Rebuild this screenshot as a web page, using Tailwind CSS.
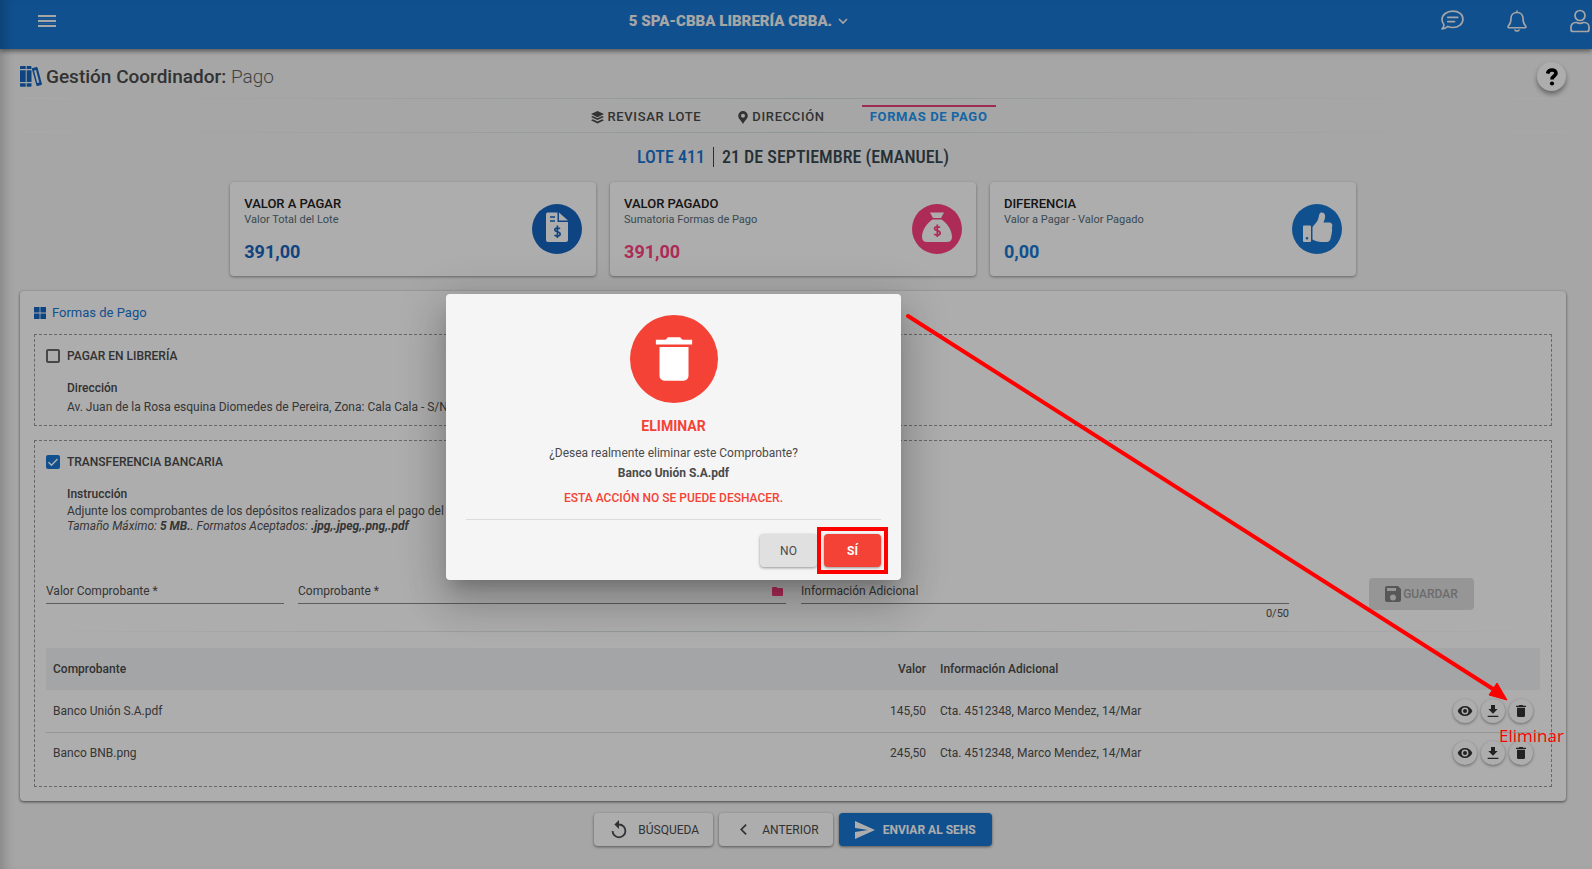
<!DOCTYPE html>
<html lang="es">
<head>
<meta charset="utf-8">
<meta name="viewport" content="width=device-width, initial-scale=1">
<title>Gestión Coordinador: Pago</title>
<script src="https://cdn.jsdelivr.net/npm/@tailwindcss/browser@4"></script>
</head>
<body class="relative min-h-screen overflow-x-hidden bg-[#f5f5f5] font-['Roboto',sans-serif] text-[12px] leading-5 text-[#505050]">

<!-- Shared icon shapes -->
<svg class="hidden" aria-hidden="true">
  <symbol id="i-trash" viewBox="0 0 24 24"><path d="M6 19a2 2 0 0 0 2 2h8a2 2 0 0 0 2-2V7H6zM19.500 4H15.500l-1-1h-5l-1 1H4.500v2h15z"/></symbol>
  <symbol id="i-eye" viewBox="0 0 24 24"><path fill-rule="evenodd" d="M12 4.500C7 4.500 2.700 7.600 1 12c1.700 4.400 6 7.500 11 7.500s9.300-3.100 11-7.500c-1.700-4.400-6-7.500-11-7.500zm0 12.700a5.200 5.200 0 1 1 0-10.400 5.200 5.200 0 0 1 0 10.400zM12 9a3 3 0 1 0 0 6 3 3 0 0 0 0-6z"/></symbol>
  <symbol id="i-down" viewBox="0 0 24 24"><path d="M19 9h-4V3H9v6H5l7 7zM4 19v2h16v-2z"/></symbol>
</svg>

<header class="flex h-[49px] items-center bg-[#1976d2] pb-2 shadow-[0_2px_5px_rgba(0,0,0,0.5)]">
  <button type="button" aria-label="Menú" class="ml-[38px] w-[18px]">
    <svg class="h-3 w-[18px]" viewBox="0 0 18 12" fill="#f5f5f5"><path d="M0 0h18v2H0zM0 5h18v2H0zM0 10h18v2H0z"/><path d="M0 3.200h18v1H0zM0 8h18v1H0z" opacity=".15"/></svg>
  </button>
  <div class="flex flex-1 justify-center">
    <button type="button" class="mr-5 flex items-center gap-1.5 text-[15px] font-black text-[#f5f5f5]">5 SPA-CBBA LIBRERÍA CBBA.
      <svg class="size-2.5" viewBox="0 0 10 10" fill="none" stroke="currentColor" stroke-width="1.700"><path d="M1 3l4 4 4-4"/></svg>
    </button>
  </div>
  <nav class="mr-0.5 flex items-center gap-[42px] text-[#f5f5f5]" aria-label="Usuario">
    <button type="button" aria-label="Mensajes"><svg class="size-[23px]" viewBox="0 0 22 22" fill="none" stroke="currentColor" stroke-width="1.600" stroke-linejoin="round"><path d="M1 19c1.400-1.200 2-2.500 1.700-4.200A7.300 7.300 0 0 1 1 10c0-4.600 4.600-8 10.300-8S21 5.300 21 9.700s-4.300 8-9.700 8c-1.700 0-3.300-.300-4.700-1C5.200 18 3.200 19 1 19zM6.500 8h9.500M6.500 12h6.500" stroke-linecap="round"/></svg></button>
    <button type="button" aria-label="Notificaciones"><svg class="size-[22px]" viewBox="0 0 22 22" fill="none" stroke="currentColor" stroke-width="1.600" stroke-linejoin="round" stroke-linecap="round"><path d="M11 1v1.500M11 2.500c-4 0-6 3-6 6 0 4.300-1 5.800-2.600 7.300-.8.700-.5 2 .700 2h15.800c1.200 0 1.500-1.300.700-2C18 14.300 17 12.800 17 8.500c0-3-2-6-6-6zM9 20c.4 1.400 3.600 1.400 4 0"/></svg></button>
    <button type="button" aria-label="Perfil"><svg class="h-[24px] w-[20px]" viewBox="0 0 20 24" fill="none" stroke="currentColor" stroke-width="1.700"><circle cx="10" cy="6.500" r="5"/><path d="M5.500 13.500h1.200c2 1 4.600 1 6.600 0h1.200a4.500 4.500 0 0 1 4.500 4.500v2.500a2 2 0 0 1-2 2H3a2 2 0 0 1-2-2V18a4.500 4.500 0 0 1 4.500-4.500z"/></svg></button>
  </nav>
</header>

<main class="pr-[26px] pl-5">
  <div class="flex h-[49px] items-center justify-between pt-1.5">
    <h1 class="flex items-center gap-1 text-[19px] leading-6 font-medium text-[#4a4a4a]">
      <svg class="h-[21px] w-[22px] text-[#1565c0]" viewBox="0 0 22 21" fill="currentColor"><path d="M0 1q0-1 1-1h4.700v3H0zM0 4.200h5.700V16H0zM0 17.200h5.700v3.500H1q-1 0-1-1zM6.700 0h3.800q1 0 1 1v2H6.700zM6.700 4.200h4.800V16H6.700zM6.700 17.200h4.800v2.500q0 1-1 1H6.700z"/><path fill-rule="evenodd" d="M12 2.300l4.400-1.200q.9-.2 1.200.700l4.300 16q.2.900-.7 1.100l-3.600 1q-.9.200-1.200-.7L12 3.500zm2 2.100l3.300 12.600 2-.5L16 3.900z"/></svg>
      <span>Gestión Coordinador: <span class="font-light text-[#616161]">Pago</span></span>
    </h1>
    <button type="button" aria-label="Ayuda" class="flex size-[29px] items-center justify-center rounded-full bg-white text-black shadow-[0_3px_5px_rgba(0,0,0,0.4)]">
      <svg class="h-[18px] w-3" viewBox="0 0 12 18" fill="none" stroke="currentColor" stroke-width="3.600"><path d="M1.500 5.600C2.100 3.200 3.700 2 6 2c2.500 0 4 1.300 4 3.200 0 3-4 2.700-4 6.200"/><circle cx="6" cy="15.500" r="2.100" fill="currentColor" stroke="none"/></svg>
    </button>
  </div>

  <div class="h-px bg-linear-to-r from-[#fafafa] via-[#d3dde1] to-[#fafafa]"></div>
  <nav class="flex h-[33px] justify-center gap-[37px] text-[13px] font-medium text-[#4a4a4a]" aria-label="Pasos">
    <a href="#lote" class="mt-1.5 flex h-6 items-center gap-1 tracking-wider"><svg class="size-[13px]" viewBox="0 0 13 13" fill="currentColor"><path d="M6.500 0L13 3 6.500 6.200 0 3zM1.800 5L0 6l6.500 3L13 6l-1.800-1-4.700 2.300zM1.800 8.200L0 9.300l6.500 3.200L13 9.300l-1.800-1.100-4.700 2.200z"/></svg>REVISAR LOTE</a>
    <a href="#direccion" class="mt-1.5 flex h-6 items-center gap-1 tracking-wider"><svg class="h-[13px] w-[10px]" viewBox="0 0 10 13" fill="currentColor"><path fill-rule="evenodd" d="M5 0a4.800 4.800 0 0 0-4.800 4.800C.2 7.600 3 9.500 5 13c2-3.500 4.800-5.400 4.800-8.200A4.800 4.800 0 0 0 5 0zm0 6.800a2 2 0 1 1 0-4 2 2 0 0 1 0 4z"/></svg>DIRECCIÓN</a>
    <a href="#pago" aria-current="step" class="mt-1.5 flex h-6 items-center border-t-2 border-[#ec407a] px-2 pb-0.5 font-bold tracking-wider text-[#2196f3]">FORMAS DE PAGO</a>
  </nav>
  <div class="h-px bg-linear-to-r from-[#fafafa] via-[#d3dde1] to-[#fafafa]"></div>

  <h2 class="mt-3 flex items-center justify-center gap-2 font-['Roboto_Condensed','Roboto',sans-serif] text-[18px] leading-6 font-medium text-[#37474f]"><span class="text-[#1976d2]">LOTE 411</span><span class="h-5 w-px bg-[#37474f]"></span><span>21 DE SEPTIEMBRE (EMANUEL)</span></h2>

  <section class="mx-auto mt-[13px] grid w-[72.8%] grid-cols-3 gap-3.5" aria-label="Totales">
    <article class="flex h-[94px] items-center justify-between rounded bg-white px-3.5 shadow-[0_1px_3px_rgba(0,0,0,0.4)]">
      <div><h3 class="text-[13px] font-medium text-[#212121]">VALOR A PAGAR</h3><p class="text-[11px] leading-3 text-[#546e7a]">Valor Total del Lote</p><p class="mt-3.5 text-[18px] leading-6 font-bold text-[#1565c0]">391,00</p></div>
      <svg class="size-[50px]" viewBox="0 0 50 50"><circle cx="25" cy="25" r="25" fill="#1565c0"/><path fill="#fff" d="M15.500 8.500h10v9.500h10.500V36q0 2-2 2H16q-2 0-2-2V10.500q0-2 1.500-2zM27 8.500l9 8h-9z"/><path stroke="#1565c0" stroke-width="1.500" d="M18 13h5M18 17h5"/><path d="M28 24.800c-1-1-5.200-1.200-5.200 1.200 0 2.300 5.400 1.300 5.400 4 0 2.500-4.400 2.600-5.700 1M25.400 21.500v12.500" fill="none" stroke="#1565c0" stroke-width="1.600"/></svg>
    </article>
    <article class="flex h-[94px] items-center justify-between rounded bg-white px-3.5 shadow-[0_1px_3px_rgba(0,0,0,0.4)]">
      <div><h3 class="text-[13px] font-medium text-[#212121]">VALOR PAGADO</h3><p class="text-[11px] leading-3 text-[#546e7a]">Sumatoria Formas de Pago</p><p class="mt-3.5 text-[18px] leading-6 font-bold text-[#ff4081]">391,00</p></div>
      <svg class="size-[50px]" viewBox="0 0 50 50"><circle cx="25" cy="25" r="25" fill="#ff4081"/><path fill="#fff" d="M18 8.500h14l-3 5.500h-8zM20.500 15.500h9C35 19 40 26 40 33q0 5-5 5H15q-5 0-5-5c0-7 5-14 10.500-17.500z"/><path d="M28 23.500c-1-1-5.500-1.200-5.500 1.300 0 2.400 5.700 1.300 5.700 4.200 0 2.600-4.700 2.700-6 1M25.300 20.500v12.500" fill="none" stroke="#ff4081" stroke-width="1.700"/></svg>
    </article>
    <article class="flex h-[94px] items-center justify-between rounded bg-white px-3.5 shadow-[0_1px_3px_rgba(0,0,0,0.4)]">
      <div><h3 class="text-[13px] font-medium text-[#212121]">DIFERENCIA</h3><p class="text-[11px] leading-3 text-[#546e7a]">Valor a Pagar - Valor Pagado</p><p class="mt-3.5 text-[18px] leading-6 font-bold text-[#1976d2]">0,00</p></div>
      <svg class="size-[50px]" viewBox="0 0 50 50"><circle cx="25" cy="25" r="25" fill="#1976d2"/><path fill="#fff" fill-rule="evenodd" d="M12 21.500h6q1 0 1 1V37q0 1-1 1h-6q-1 0-1-1V22.500q0-1 1-1zm3 11.500a1.300 1.300 0 1 0 0 2.600 1.300 1.300 0 0 0 0-2.600z"/><path fill="#fff" d="M20.500 23c2-2.500 5-5 6-9 .5-3 1-5.500 3-5.500 3 0 4 2.500 3.500 5-.3 2-1 3.500-1.500 5H37c3 0 4 2.500 3 4.500 .6 5-1 9-1.500 12-.8 2.500-2.500 3-5 3-5 .3-9-.5-13-2.500z"/></svg>
    </article>
  </section>

  <section class="mt-[15px] rounded bg-white px-3.5 pt-3 pb-[14px] shadow-[0_1px_3px_rgba(0,0,0,0.6)]">
    <h2 class="flex items-center gap-1.5 text-[13px] text-[#1976d2]"><svg class="size-3" viewBox="0 0 12 12" fill="#1565c0"><path d="M0 0h5.600v5.600H0zM6.400 0H12v5.600H6.400zM0 6.400h5.600V12H0zM6.400 6.400H12V12H6.400z"/></svg>Formas de Pago</h2>

    <div class="mt-[11px] border border-dashed border-[#9a9a9a] px-[11px] pt-[11px] pb-[9px]">
      <label class="flex items-center gap-[7px] font-medium text-[#4a4a4a]"><input type="checkbox" class="size-3.5 appearance-none rounded-xs border-2 border-[#6a6a6a]">PAGAR EN LIBRERÍA</label>
      <h3 class="mt-3 ml-[21px] font-medium text-[#4a4a4a]">Dirección</h3>
      <p class="ml-[21px] leading-[18px]">Av. Juan de la Rosa esquina Diomedes de Pereira, Zona: Cala Cala - S/N</p>
    </div>

    <div class="mt-3.5 border border-dashed border-[#9a9a9a] px-[11px] pt-[11px] pb-3">
      <label class="flex items-center gap-[7px] font-medium text-[#4a4a4a]"><span class="grid"><input type="checkbox" checked class="col-start-1 row-start-1 size-3.5 appearance-none rounded-xs bg-[#1976d2]"><svg class="pointer-events-none col-start-1 row-start-1 size-3.5" viewBox="0 0 14 14" fill="none" stroke="#fff" stroke-width="1.500"><path d="M2.500 7.300l3 3 6-6.300"/></svg></span>TRANSFERENCIA BANCARIA</label>
      <h3 class="mt-3 ml-[21px] font-medium text-[#4a4a4a]">Instrucción</h3>
      <p class="ml-[21px] leading-[15px]">Adjunte los comprobantes de los depósitos realizados para el pago del lote.<br><em>Tamaño Máximo: <strong>5 MB.</strong>. Formatos Aceptados: <strong>.jpg,.jpeg,.png,.pdf</strong></em></p>

      <form class="mt-[47px] flex items-start">
        <div class="grid w-[238px] border-b border-[#8a8a8a] pb-0.5"><label for="valor" class="col-start-1 row-start-1">Valor Comprobante *</label><input id="valor" type="text" class="col-start-1 row-start-1 w-full bg-transparent outline-none"></div>
        <div class="ml-3.5 grid flex-1 border-b border-[#8a8a8a] pb-0.5"><label for="comp" class="col-start-1 row-start-1 flex items-center justify-between pr-[3px]">Comprobante *<svg class="h-[9px] w-[11px]" viewBox="0 0 11 9" fill="#ff4081"><path d="M1 0h3.500l1 1H10q1 0 1 1v6q0 1-1 1H1Q0 9 0 8V1q0-1 1-1z"/></svg></label><input id="comp" type="text" class="col-start-1 row-start-1 w-full bg-transparent outline-none"></div>
        <div class="ml-[15px] flex-1"><div class="grid border-b border-[#8a8a8a] pb-0.5"><label for="info" class="col-start-1 row-start-1">Información Adicional</label><input id="info" type="text" maxlength="50" class="col-start-1 row-start-1 w-full bg-transparent outline-none"></div><p class="text-right text-[11px] leading-5">0/50</p></div>
        <button type="button" disabled class="-mt-[3px] mr-[66px] ml-20 flex h-8 w-[105px] items-center justify-center gap-0.5 rounded bg-[#dedede] font-medium text-[#a0a0a0]"><svg class="size-4" viewBox="0 0 16 16" fill="#808080"><path fill-rule="evenodd" d="M2 0h11l3 3v11q0 2-2 2H2q-2 0-2-2V2Q0 0 2 0zm0 2v3h9V2zm6 6.500a3 3 0 1 0 0 6 3 3 0 0 0 0-6z"/></svg>GUARDAR</button>
      </form>
      <div class="mt-[7px] h-px bg-linear-to-r from-white via-[#cfd8dc] to-white"></div>

      <table class="mt-4 w-full table-fixed">
        <thead><tr class="h-[42px] bg-[#f1f4f6] text-left text-[#4a4a4a]"><th class="w-[50%] px-[7px] font-medium">Comprobante</th><th class="w-[140px] px-[7px] text-right font-medium">Valor</th><th class="px-[7px] font-medium">Información Adicional</th><th class="w-[120px]" aria-label="Acciones"></th></tr></thead>
        <tbody>
          <tr class="h-[42px] border-b border-[#dcdcdc]"><td class="px-[7px]">Banco Unión S.A.pdf</td><td class="px-[7px] text-right">145,50</td><td class="px-[7px]">Cta. 4512348, Marco Mendez, 14/Mar</td>
            <td class="pr-[7px]"><div class="flex justify-end gap-1 text-[#333]">
              <button type="button" aria-label="Ver" class="flex size-6 items-center justify-center rounded-full bg-white shadow-[0_1px_3px_rgba(0,0,0,0.4)]"><svg class="size-4" fill="currentColor"><use href="#i-eye"/></svg></button>
              <button type="button" aria-label="Descargar" class="flex size-6 items-center justify-center rounded-full bg-white shadow-[0_1px_3px_rgba(0,0,0,0.4)]"><svg class="size-4" fill="currentColor"><use href="#i-down"/></svg></button>
              <button type="button" aria-label="Eliminar" class="flex size-6 items-center justify-center rounded-full bg-white shadow-[0_1px_3px_rgba(0,0,0,0.4)]"><svg class="size-4" fill="currentColor"><use href="#i-trash"/></svg></button></div></td></tr>
          <tr class="h-[42px]"><td class="px-[7px]">Banco BNB.png</td><td class="px-[7px] text-right">245,50</td><td class="px-[7px]">Cta. 4512348, Marco Mendez, 14/Mar</td>
            <td class="pr-[7px]"><div class="flex justify-end gap-1 text-[#333]">
              <button type="button" aria-label="Ver" class="flex size-6 items-center justify-center rounded-full bg-white shadow-[0_1px_3px_rgba(0,0,0,0.4)]"><svg class="size-4" fill="currentColor"><use href="#i-eye"/></svg></button>
              <button type="button" aria-label="Descargar" class="flex size-6 items-center justify-center rounded-full bg-white shadow-[0_1px_3px_rgba(0,0,0,0.4)]"><svg class="size-4" fill="currentColor"><use href="#i-down"/></svg></button>
              <button type="button" aria-label="Eliminar" class="flex size-6 items-center justify-center rounded-full bg-white shadow-[0_1px_3px_rgba(0,0,0,0.4)]"><svg class="size-4" fill="currentColor"><use href="#i-trash"/></svg></button></div></td></tr>
        </tbody>
      </table>
    </div>
  </section>

  <div class="mt-3 flex justify-center gap-1.5 text-[#4a4a4a]">
    <button type="button" class="flex h-[33px] items-center gap-2 rounded bg-white px-3.5 shadow-[0_1px_3px_rgba(0,0,0,0.5)]"><svg class="size-[22px]" viewBox="0 0 24 24" fill="currentColor"><path d="M12 5V1L7 6l5 5V7a6 6 0 1 1-6 6H4a8 8 0 1 0 8-8z"/></svg>BÚSQUEDA</button>
    <button type="button" class="flex h-[33px] items-center gap-2 rounded bg-white px-3.5 shadow-[0_1px_3px_rgba(0,0,0,0.5)]"><svg class="size-[21px]" viewBox="0 0 24 24" fill="none" stroke="currentColor" stroke-width="2"><path d="M15 6.500L9.500 12l5.500 5.500"/></svg>ANTERIOR</button>
    <button type="button" class="flex h-[33px] items-center gap-2 rounded bg-[#1976d2] px-4 font-bold text-white shadow-[0_1px_3px_rgba(0,0,0,0.5)]"><svg class="h-[18px] w-5" viewBox="0 0 20 18" fill="currentColor"><path d="M0 0l20 9L0 18v-7l13-2L0 7z"/></svg>ENVIAR AL SEHS</button>
  </div>
</main>

<!-- Modal layer -->
<div class="absolute inset-0 bg-black/32 shadow-[inset_12px_0_12px_-8px_rgba(0,0,0,0.2)]">
  <div role="dialog" aria-modal="true" aria-labelledby="dlg-title" class="absolute top-[294px] left-[446px] w-[455px] rounded bg-[#f5f5f5] px-5 pt-[21px] pb-[13px] text-center text-[#4a4a4a] shadow-[0_11px_15px_-7px_rgba(0,0,0,0.2),0_24px_38px_3px_rgba(0,0,0,0.14),0_9px_46px_8px_rgba(0,0,0,0.12)]">
    <div class="mx-auto flex size-[88px] items-center justify-center rounded-full bg-[#f44336]"><svg class="size-[58px]" fill="#fff"><use href="#i-trash"/></svg></div>
    <h2 id="dlg-title" class="mt-[13px] text-[14px] font-bold text-[#f44336]">ELIMINAR</h2>
    <p class="mt-[7px]">¿Desea realmente eliminar este Comprobante?</p>
    <p class="font-bold">Banco Unión S.A.pdf</p>
    <p class="mt-[5px] font-medium text-[#f44336]">ESTA ACCIÓN NO SE PUEDE DESHACER.</p>
    <hr class="mt-[11px] border-[#dcdcdc]">
    <div class="mt-3.5 flex justify-end">
      <button type="button" class="h-[33px] w-[57px] rounded bg-[#e0e0e0] shadow-[0_1px_3px_rgba(0,0,0,0.4)]">NO</button>
      <div class="-my-[7px] -mr-[7px] border-4 border-[#ff0000] p-[3px]">
        <button type="button" class="h-[33px] w-[57px] rounded bg-[#f44336] font-bold text-white shadow-[0_1px_3px_rgba(0,0,0,0.4)]">SÍ</button>
      </div>
    </div>
  </div>

  <!-- Callout arrow and label -->
  <svg class="absolute top-[313px] left-[905px] h-[390px] w-[606px]" viewBox="0 0 606 390" aria-hidden="true"><path d="M3 3L588 376" stroke="#f00" stroke-width="4" stroke-linecap="round"/><path d="M602 387l-18-5 8-12z" fill="#f00" stroke="#f00"/></svg>
  <span class="absolute top-[726px] left-[1499px] font-['Open_Sans',sans-serif] text-[17px] text-[#ff0000]">Eliminar</span>
</div>
</body>
</html>
